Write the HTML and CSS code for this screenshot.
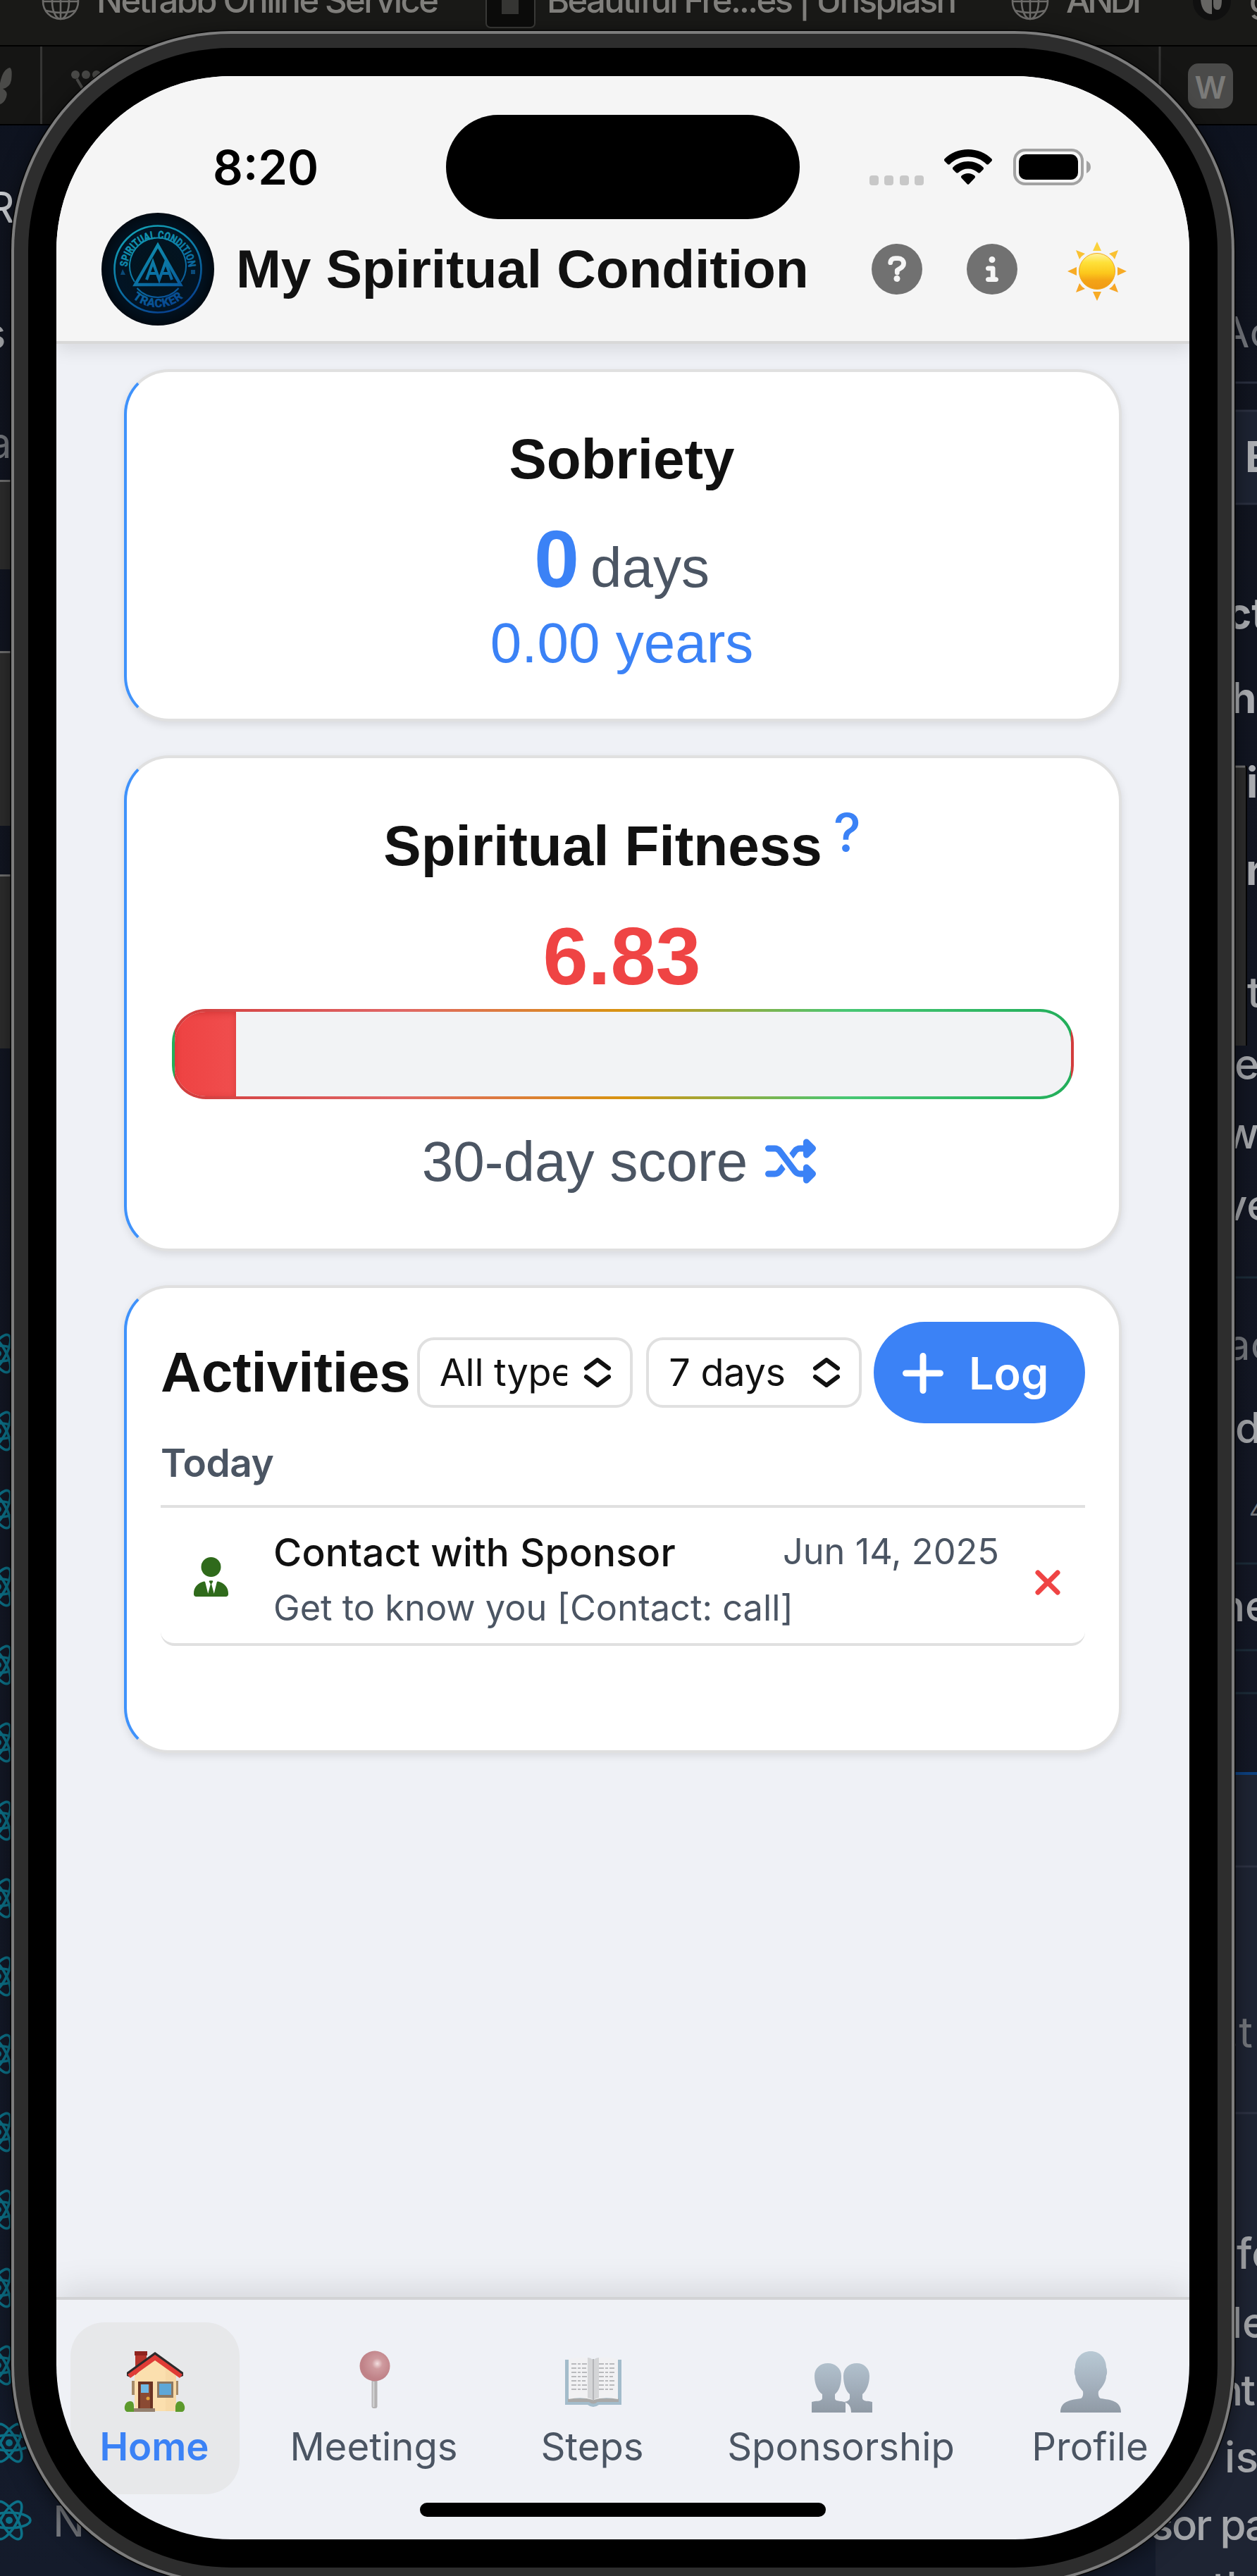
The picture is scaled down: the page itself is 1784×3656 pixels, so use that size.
FILE: index.html
```html
<!DOCTYPE html>
<html lang="en">
<head>
<meta charset="utf-8">
<title>My Spiritual Condition</title>
<link rel="stylesheet" href="styles.css">
</head>
<body>
<svg class="desktop" viewBox="0 0 1784 3656" width="1784" height="3656" aria-hidden="true">
  <defs>
    <linearGradient id="navy" x1="0" y1="0" x2="0" y2="1"><stop offset="0" stop-color="#0a1120"/><stop offset=".08" stop-color="#10141f"/><stop offset=".6" stop-color="#131724"/><stop offset="1" stop-color="#141b2b"/></linearGradient>
    <g id="globe" fill="none" stroke="#6c6b69" stroke-width="2.6"><circle r="25"/><ellipse rx="12" ry="25"/><path d="M0-25V25M-25 0H25M-21 13Q0 19 21 13M-21-13Q0-19 21-13"/></g>
    <g id="atom" fill="none" stroke="#0c7188" stroke-width="3.6"><ellipse rx="30" ry="11"/><ellipse rx="30" ry="11" transform="rotate(60)"/><ellipse rx="30" ry="11" transform="rotate(120)"/><circle r="5" fill="#0c7188" stroke="none"/></g>
  </defs>
  <rect width="1784" height="3656" fill="url(#navy)"/>
  <rect width="1784" height="64" fill="#191917"/>
  <rect y="64" width="1784" height="2" fill="#000"/>
  <rect y="66" width="1784" height="110" fill="#151514"/>
  <rect y="176" width="1784" height="2" fill="#000"/>
  <path d="M58.500 66V176M1646 66V176" stroke="#353534" stroke-width="3"/>
  <use href="#globe" x="86" y="2"/><use href="#globe" x="1462" y="2"/>
  <g class="bookmark">
    <text x="137" y="18" textLength="486">Netfabb Online Service</text>
    <text x="776" y="18" textLength="582">Beautiful Fre...es | Unsplash</text>
    <text x="1513" y="18" textLength="107">ANDI</text>
    <text x="1773" y="18">g</text>
  </g>
  <path d="M690 0V33a6 6 0 0 0 6 6H753a6 6 0 0 0 6-6V0" fill="#0c0c0b" stroke="#3a3a38" stroke-width="2"/><rect x="712" width="24" height="20" fill="#353533"/>
  <circle cx="1720" cy="2" r="27" fill="#101010"/><path d="M1704 0q2 20 16 20V0zM1722 0h12q0 14-6 14t-6-8z" fill="#666563"/>
  <rect x="1686" y="90" width="64" height="64" rx="15" fill="#4a4a49"/><text class="badge-letter" x="1718" y="140">W</text>
  <path d="M0 118Q4 98 14 96Q18 98 16 114Q14 124 4 126Q12 130 9 138Q6 146 0 148z" fill="#4a4a48"/>
  <g fill="#4a4a48"><circle cx="107" cy="106" r="6"/><circle cx="122" cy="106" r="6"/><circle cx="137" cy="106" r="6"/><path d="M109 112L121 132L133 112" fill="none" stroke="#4a4a48" stroke-width="4"/></g>
  <rect x="1752" y="582" width="32" height="133" fill="#1d2332"/>
  <rect x="1640" y="2518" width="144" height="1138" fill="#1e2433"/>
  <path d="M1752 583H1784M1752 715H1784M1752 543H1784" stroke="#2b3040" stroke-width="3"/>
  <path d="M1752 1813H1784M1752 2219H1784M1752 2342H1784M1752 2403H1784" stroke="#1c2c39" stroke-width="3"/>
  <path d="M1752 2517H1784" stroke="#0d4180" stroke-width="4"/>
  <path d="M1752 2649H1784M1752 2999H1784" stroke="#2d3243" stroke-width="3"/>
  <g class="page-text">
    <text x="-18" y="316" class="light">R</text>
    <text x="-24" y="495">s</text>
    <text x="-17" y="650" class="dim">a</text>
    <text x="1732" y="493" class="dim">Ac</text>
    <text x="1767" y="670" class="bold">B</text>
    <text x="1741" y="892" class="bold">ct</text>
    <text x="1746" y="1012" class="bold">h</text>
    <text x="1769" y="1132" class="bold">i</text>
    <text x="1768" y="1256" class="bold">r</text>
    <text x="1770" y="1430">t</text>
    <text x="1752" y="1532">e</text>
    <text x="1737" y="1630">w</text>
    <text x="1736" y="1732">ve</text>
    <text x="1741" y="1930" class="dim">ac</text>
    <text x="1753" y="2048">d</text>
    <text x="1773" y="2156" class="dim small">4</text>
    <text x="1731" y="2301">he</text>
    <text x="1741" y="2906" class="dim">.t</text>
    <text x="1755" y="3220">fo</text>
    <text x="1726" y="3318">de</text>
    <text x="1728" y="3414" textLength="54">nt</text>
    <text x="1738" y="3509" textLength="48">is</text>
    <text x="1633" y="3605" textLength="168">sor pa</text>
    <text x="1720" y="3694">th</text>
    <text x="75" y="3600" class="dim">No</text>
  </g>
  <g id="files">
    <use href="#atom" x="-3" y="1921"/><use href="#atom" x="-3" y="2031"/><use href="#atom" x="-3" y="2142"/><use href="#atom" x="-3" y="2252"/><use href="#atom" x="-3" y="2363"/><use href="#atom" x="-3" y="2473"/><use href="#atom" x="-3" y="2584"/><use href="#atom" x="-3" y="2694"/><use href="#atom" x="-3" y="2805"/><use href="#atom" x="-3" y="2915"/><use href="#atom" x="-3" y="3026"/><use href="#atom" x="-3" y="3136"/><use href="#atom" x="-3" y="3247"/><use href="#atom" x="-3" y="3357"/><use href="#atom" x="13" y="3467"/><use href="#atom" x="13" y="3577"/>
  </g>
  <g fill="#2d2d2d"><rect y="681" width="20" height="127"/><rect y="924" width="20" height="248"/><rect y="1241" width="20" height="247"/><rect x="1748" y="1087" width="20" height="397"/></g>
  <path d="M0 682.500H16M0 925.500H16M0 1242.500H16M1752 1088H1767" stroke="#6f6f6f" stroke-width="3"/>
  <path d="M1769 1087V1484" stroke="#060606" stroke-width="2"/>
</svg>

<div class="phone"><div class="phone-band"><div class="phone-bezel">
<div class="screen">
  <div class="status">
    <span class="time">8:20</span>
    <div class="island"></div>
    <div class="signals">
      <span class="dots"><i></i><i></i><i></i><i></i></span>
      <svg class="wifi" viewBox="0 0 68 50"><path d="M34 0C47 0 59 5 67.500 13.500Q68.500 15 67.500 16.500L63 21Q61.500 22 60 21C53 14 44 10.500 34 10.500S15 14 8 21Q6.500 22 5 21L.5 16.500Q-.5 15 .5 13.500C9 5 21 0 34 0zM34 17C42 17 50 20 55.500 25.500Q56.500 27 55.500 28.500L51 33Q49.500 34 48 33C44 29.500 39.500 27.500 34 27.500S24 29.500 20 33Q18.500 34 17 33L12.500 28.500Q11.500 27 12.500 25.500C18 20 26 17 34 17zM34 34Q39.500 34 43.500 37.500Q44.500 39 43.500 40.500L35 49.500Q34 50 33 49.500L24.500 40.500Q23.500 39 24.500 37.500Q28.500 34 34 34z"/></svg>
      <svg class="battery" viewBox="0 0 110 52"><rect x="2" y="2" width="96" height="48" rx="15" fill="none" stroke="#a2a2a2" stroke-width="4"/><rect x="8" y="8" width="84" height="36" rx="10"/><path d="M104 17q6 3 6 9t-6 9z" fill="#a2a2a2"/></svg>
    </div>
  </div>

  <header class="app-header">
    <svg class="logo" viewBox="0 0 160 160">
      <defs>
        <radialGradient id="disc"><stop offset="0" stop-color="#03131b"/><stop offset=".72" stop-color="#021424"/><stop offset="1" stop-color="#020a12"/></radialGradient>
        <linearGradient id="ink" gradientUnits="userSpaceOnUse" x1="50" y1="20" x2="110" y2="145"><stop offset="0" stop-color="#13a0b5"/><stop offset=".5" stop-color="#0b73a3"/><stop offset="1" stop-color="#07398c"/></linearGradient>
        <path id="arcTop" d="M36.500 80A43.500 43.500 0 0 1 123.500 80"/>
        <path id="arcBottom" d="M26 80A54 54 0 0 0 134 80"/>
      </defs>
      <circle cx="80" cy="80" r="80" fill="url(#disc)"/>
      <g fill="none" stroke="url(#ink)">
        <circle cx="80" cy="80" r="61.500" stroke-width="2.600"/>
        <path d="M47 98A40 40 0 1 1 113 98M50.500 107A40 40 0 0 0 109.500 107" stroke-width="2"/>
        <path d="M80 46L48 102H112Z" stroke-width="4.500"/>
        <path d="M64 95L73 70L82 95L91 70L100 95M67 86H79M85 86H97" stroke-width="4"/>
      </g>
      <g class="logo-text" fill="url(#ink)" stroke="url(#ink)" stroke-width=".5">
        <text font-size="15"><textPath href="#arcTop" startOffset="3" textLength="131" lengthAdjust="spacingAndGlyphs">SPIRITUAL CONDITION</textPath></text>
        <text font-size="16.500"><textPath href="#arcBottom" startOffset="46" textLength="78">TRACKER</textPath></text>
      </g>
      <path d="M27 88l3-8l4 8zM127 81h6v6h-6z" fill="#0a4a78"/>
    </svg>
    <h1>My Spiritual Condition</h1>
    <svg class="header-icon" viewBox="0 0 512 512"><circle cx="256" cy="256" r="256" fill="#717171"/><path d="M190 190C192 160 212 146 240 146H268C300 146 324 168 324 198C324 222 310 236 292 247L258 268V292" fill="none" stroke="#f5f5f5" stroke-width="48" stroke-linecap="round" stroke-linejoin="round"/><circle cx="256" cy="352" r="32" fill="#f5f5f5"/></svg>
    <svg class="header-icon info" viewBox="0 0 512 512"><path fill="#717171" d="M256 512A256 256 0 1 0 256 0a256 256 0 1 0 0 512zM216 336h24V272H216c-13.300 0-24-10.700-24-24s10.700-24 24-24h48c13.300 0 24 10.700 24 24v88h8c13.300 0 24 10.700 24 24s-10.700 24-24 24H216c-13.300 0-24-10.700-24-24s10.700-24 24-24zm40-208a32 32 0 1 1 0 64 32 32 0 1 1 0-64z"/></svg>
    <svg class="sun" viewBox="0 0 84 84">
      <defs><linearGradient id="sunFill" x1="0" y1="0" x2="0" y2="1"><stop offset="0" stop-color="#fff3a0"/><stop offset=".25" stop-color="#fee13a"/><stop offset=".55" stop-color="#fcc81c"/><stop offset=".75" stop-color="#f4a416"/><stop offset="1" stop-color="#f09a14"/></linearGradient></defs>
      <path d="M42 0L48 13H36z" fill="#fbd23c"/><path d="M42 84L48 71H36zM0 42L13 36V48zM84 42L71 36V48z" fill="#f7ab25"/><path d="M12 12L25 17Q20 20 17 25zM72 12L59 17Q64 20 67 25z" fill="#f9c133"/><path d="M12 72L25 67Q20 64 17 59zM72 72L59 67Q64 64 67 59z" fill="#f6a627"/>
      <circle cx="42" cy="42" r="25.500" fill="url(#sunFill)" stroke="#f3a91c" stroke-width="1"/>
    </svg>
  </header>

  <main>
    <section class="card sobriety">
      <h2>Sobriety</h2>
      <p class="days"><b>0</b><span>days</span></p>
      <p class="years">0.00 years</p>
    </section>

    <section class="card fitness">
      <h2>Spiritual Fitness<sup>?</sup></h2>
      <p class="score">6.83</p>
      <div class="meter"><div class="meter-fill" style="width:6.83%"></div></div>
      <p class="window">30-day score
        <svg viewBox="0 0 512 512"><path d="M403.800 34.400c12-5 25.700-2.200 34.900 6.900l64 64c6 6 9.400 14.100 9.400 22.600s-3.400 16.600-9.400 22.600l-64 64c-9.200 9.200-22.900 11.900-34.900 6.900s-19.800-16.600-19.800-29.600V160H352c-10.100 0-19.600 4.700-25.600 12.800L284 229.300 244 176l31.200-41.600C293.300 110.200 321.800 96 352 96h32V64c0-12.900 7.800-24.600 19.800-29.600zM164 282.700L204 336l-31.200 41.600C154.700 401.800 126.200 416 96 416H32c-17.700 0-32-14.300-32-32s14.300-32 32-32H96c10.100 0 19.600-4.700 25.600-12.800L164 282.700zm274.600 188c-9.200 9.200-22.900 11.900-34.900 6.900s-19.800-16.600-19.800-29.600V416H352c-30.200 0-58.700-14.200-76.800-38.400L121.600 172.800c-6-8.100-15.500-12.800-25.600-12.800H32c-17.700 0-32-14.300-32-32s14.300-32 32-32H96c30.200 0 58.700 14.200 76.800 38.400L326.400 339.200c6 8.100 15.500 12.800 25.600 12.800h32V320c0-12.900 7.800-24.600 19.800-29.600s25.700-2.200 34.900 6.900l64 64c6 6 9.400 14.100 9.400 22.600s-3.400 16.600-9.400 22.600l-64 64z"/></svg>
      </p>
    </section>

    <section class="card activities">
      <div class="toolbar">
        <h2>Activities</h2>
        <div class="select"><span class="all">All types</span><svg viewBox="0 0 40 42"><path d="M4 15L20 3L36 15M4 27L20 39L36 27"/></svg></div>
        <div class="select"><span class="seven">7 days</span><svg viewBox="0 0 40 42"><path d="M4 15L20 3L36 15M4 27L20 39L36 27"/></svg></div>
        <button class="log"><svg viewBox="0 0 58 58"><path d="M29 4.500V53.500M4.500 29H53.500"/></svg><span>Log</span></button>
      </div>
      <h3>Today</h3>
      <article class="entry">
        <svg class="tie" viewBox="0 0 448 512"><path d="M224 256A128 128 0 1 0 224 0a128 128 0 1 0 0 256zm-15 48c-8 0-13 8-9 15l18 31-33 123-36-146c-2-9-10-14-19-12C54 331 0 393 0 467v15c0 17 13 30 30 30H418c17 0 30-13 30-30v-15c0-74-54-136-130-152-9-2-17 3-19 12L263 473 230 350l18-31c4-7-1-15-9-15z"/></svg>
        <div class="entry-body">
          <div class="entry-head"><strong>Contact with Sponsor</strong><time>Jun 14, 2025</time></div>
          <p>Get to know you [Contact: call]</p>
        </div>
        <svg class="remove" viewBox="0 0 36 36"><path d="M4 4L32 32M32 4L4 32"/></svg>
      </article>
    </section>
  </main>

  <nav>
    <a class="tab active">
      <svg viewBox="0 0 88 88"><rect x="16" y="2" width="16" height="36" fill="#b5342b"/><rect x="15" y="1" width="18" height="6" fill="#8f231e"/><rect x="11" y="43" width="5" height="20" fill="#a58a68"/><rect x="72" y="43" width="5" height="20" fill="#a58a68"/><path d="M44 8L15 36V86H74V36z" fill="#fbdfae"/><path d="M44 8L59 24V86H74V36z" fill="#f3d3a0" opacity=".5"/><path d="M44 2L4 31V36L9 38L44 10L79 38L84 36V31z" fill="#2e2a2b"/><path d="M44 6L5 34L9 39L44 14L79 39L83 34z" fill="#e03c36"/><rect x="20" y="44" width="21" height="40" fill="#6b3323"/><rect x="23" y="48" width="14" height="34" fill="#8a4a33"/><rect x="24" y="48" width="11" height="12" fill="#70b8e4"/><circle cx="34" cy="68" r="2.500" fill="#e3a43c"/><rect x="47" y="44" width="23" height="23" fill="#8d7760"/><rect x="50" y="47" width="17" height="16" fill="#5ea7d8"/><rect x="13" y="82" width="31" height="5" fill="#94806f"/><path d="M4 87q-4-2-3-8t7-7t6 7v8zM73 87v-8q1-7 6-7t7 7q1 6-3 8z" fill="#5d9a2c"/></svg>
      <span>Home</span>
    </a>
    <a class="tab meetings">
      <svg viewBox="0 0 88 88"><defs><radialGradient id="pinHead" cx=".58" cy=".42"><stop offset="0" stop-color="#f3dfe0"/><stop offset=".35" stop-color="#cf9b9f"/><stop offset="1" stop-color="#c08288"/></radialGradient></defs><rect x="39.500" y="40" width="8" height="42" rx="3" fill="#b4b2b3"/><rect x="41" y="44" width="2.500" height="36" fill="#cfcfd0"/><circle cx="44" cy="22" r="21.500" fill="url(#pinHead)"/></svg>
      <span>Meetings</span>
    </a>
    <a class="tab steps">
      <svg viewBox="0 0 88 88"><path d="M4 13H84V77H52Q44 83 36 77H4z" fill="#a3bccb"/><path d="M8 68H80V73H50Q44 78 38 73H8z" fill="#a9a9a8"/><path d="M9 12Q30 7 43.500 13V70Q28 65 9 69zM79 12Q58 7 44.500 13V70Q60 65 79 69z" fill="#f1f1f3"/><path d="M43.500 13Q40 10 36 10V67Q40 68 44 70Q48 68 52 67V10Q48 10 44.500 13z" fill="#d4d5d7"/><path d="M44 12V71" stroke="#b4b5b8" stroke-width="2"/><path d="M13 19H36M13 25H34M13 31H36M13 37H36M13 43H33M13 49H36M13 55H35M52 19H75M52 25H74M52 31H75M52 37H72M52 43H75M52 49H75M52 55H72" stroke="#b9babd" stroke-width="2" stroke-dasharray="7 2 4 2"/></svg>
      <span>Steps</span>
    </a>
    <a class="tab sponsorship">
      <svg viewBox="0 0 88 88"><defs><linearGradient id="people" gradientUnits="userSpaceOnUse" x1="0" y1="0" x2="0" y2="88"><stop offset="0" stop-color="#b9cad5"/><stop offset=".5" stop-color="#a6b3c0"/><stop offset="1" stop-color="#909aa5"/></linearGradient></defs><path d="M24 18C34 18 43 25 43 36C43 50 39 58 34 62V68C34 73 46 71 49 74V88H1V73C6 71 15 73 16 68V62C9 57 5 47 5 36C5 25 13 18 24 18z" fill="url(#people)"/><path d="M65 18C75 18 83 25 83 36C83 47 79 57 73 62V68C74 73 82 71 87 73V88H57C57 80 54 75 47 73Q54 72 55 68V62C49 57 46 47 46 36C46 25 54 18 65 18z" fill="url(#people)"/></svg>
      <span>Sponsorship</span>
    </a>
    <a class="tab profile">
      <svg viewBox="0 0 88 88"><path d="M44 1C57 1 66 11 66 24C67 26 68 32 66 36C66 46 58 54 55 58Q54 66 58 68C72 70 87 71 87 88H1C1 71 16 70 30 68Q34 66 33 58C30 54 22 46 22 36C20 32 21 26 22 24C22 11 31 1 44 1z" fill="url(#people)"/></svg>
      <span>Profile</span>
    </a>
  </nav>
  <div class="home-indicator"></div>
</div>
</div></div></div>
</body>
</html>
```
FILE: styles.css
```css
* { box-sizing: border-box; }
html, body { margin: 0; height: 3656px; overflow: hidden; background: #10141f; }
body { position: relative; font-family: Inter, "Noto Sans", sans-serif; color: #111; }
h1, h2, h3, p { margin: 0; }
svg { display: block; flex: none; }

/* desktop behind the simulator */
.desktop { position: absolute; inset: 0; }
.bookmark { font: 500 49px Inter, sans-serif; fill: #807f7c; }
.badge-letter { font: 600 44px Inter, sans-serif; fill: #7b7b79; text-anchor: middle; }
.page-text { font: 500 60px Inter, sans-serif; fill: #a5a7ab; }
.page-text .dim { fill: #74777d; font-weight: 400; }
.page-text .light { fill: #c9ccd1; font-weight: 400; }
.page-text .bold { font-weight: 700; fill: #aeb0b4; }
.page-text .small { font-size: 34px; }

/* device */
.phone { position: absolute; left: 16px; top: 44px; width: 1736px; height: 3624px; padding: 4px; border-radius: 312px; background: #7d7d7d; box-shadow: 0 0 0 1.5px #050505, 0 6px 30px rgba(0, 0, 0, .5); }
.phone-band { height: 100%; padding: 20px; border-radius: 308px; background: #2d2d2d; }
.phone-bezel { height: 100%; padding: 40px; border-radius: 288px; background: #000; }
.screen { position: relative; display: flex; flex-direction: column; height: 100%; overflow: hidden; border-radius: 248px; background: #eff1f6; }

/* status bar */
.status { position: relative; z-index: 2; display: grid; grid-template-columns: 553px 502px 1fr; height: 194px; padding-top: 55px; background: #f5f5f5; flex: none; }
.time { padding-left: 222px; line-height: 150px; font-size: 67px; font-weight: 600; color: #000; }
.island { height: 148px; border-radius: 74px; background: #000; }
.signals { display: flex; align-items: center; height: 148px; padding-left: 99px; }
.dots { display: flex; gap: 8.300px; margin: 38px 29px 0 0; }
.dots i { width: 13px; height: 14px; border-radius: 4px; background: #c8c8c8; }
.wifi { width: 68px; height: 50px; margin-right: 30px; }
.battery { width: 110px; height: 52px; }

/* header */
.app-header { display: flex; align-items: center; height: 186px; padding: 0 89px 22px 64px; border-bottom: 4px solid #d8d8d8; background: #f5f5f5; box-shadow: 0 8px 24px rgba(0, 0, 0, .1); flex: none; z-index: 1; }
.logo { width: 160px; height: 160px; }
.logo-text { font-family: Roboto, sans-serif; font-weight: 700; }
.app-header h1 { margin: 0 auto 2px 31px; font: 700 76.800px/96px "Liberation Sans", sans-serif; letter-spacing: -.1px; white-space: nowrap; }
.header-icon { width: 72px; height: 72px; }
.info { margin-left: 63px; }
.sun { width: 84px; height: 84px; margin: 5px 0 0 71px; }

/* cards */
main { flex: 1; display: flex; flex-direction: column; gap: 48px; padding: 36px 96px 0; }
.card { border: 4px solid #e0e0e0; border-left-color: #3f92fb; border-radius: 64px; background: #fff; box-shadow: 0 4px 12px rgba(0, 0, 0, .1); font-family: "Liberation Sans", sans-serif; }
.card h2 { font-size: 80px; line-height: 96px; font-weight: 700; }
.sobriety { height: 500px; padding: 76px 3px 0 0; text-align: center; }
.days { display: flex; justify-content: center; align-items: baseline; gap: 16px; margin-top: 35px; font-size: 80px; line-height: 116px; height: 116px; color: #4b5563; }
.days b { font-size: 115.200px; color: #3b82f6; }
.years { margin-top: 14px; font-size: 80px; line-height: 96px; color: #3b82f6; }
.fitness { height: 704px; padding-top: 77px; text-align: center; }
.fitness h2 { display: flex; justify-content: center; gap: 16px; padding-right: 2px; }
.fitness sup { font: 500 74px/96px Inter, sans-serif; color: #3b82f6; position: relative; top: -20px; }
.score { margin-top: 50px; padding-right: 3px; font-size: 115.200px; line-height: 116px; font-weight: 700; color: #ef4444; }
.meter { height: 128px; margin: 17px 64px 0; border: 4px solid transparent; border-radius: 48px; overflow: hidden;
  background: linear-gradient(#f2f3f5, #f2f3f5) padding-box, linear-gradient(90deg, #d23c3c 0, #e06666 25%, #d99310 50%, #48c774 75%, #22ae5a 100%) border-box; background-origin: padding-box; }
.meter-fill { height: 100%; background: linear-gradient(90deg, #ee4242, #f04e4e); box-shadow: inset 0 2px 10px rgba(160, 20, 20, .35); }
.window { display: flex; justify-content: center; align-items: center; gap: 25px; margin-top: 41px; padding-right: 11px; font-size: 80px; line-height: 96px; color: #4b5563; }
.window svg { width: 72px; height: 72px; margin-top: -2px; fill: #3b82f6; }

/* activities */
.activities { height: 664px; padding: 48px; font-family: Inter, sans-serif; }
.toolbar { display: grid; grid-template-columns: 350px 306px 306px 300px; column-gap: 10px; justify-content: space-between; align-items: center; height: 144px; }
.toolbar h2 { font-family: "Liberation Sans", sans-serif; letter-spacing: -.1px; }
.select { display: flex; align-items: center; justify-content: space-between; height: 100px; padding: 0 26px 0 28px; border: 4px solid #e0e0e0; border-radius: 24px; font-size: 54px; line-height: 80px; color: #111; }
.toolbar .select:nth-child(2) { margin: 0 3px 0 -3px; }
.select span { width: 181px; overflow: hidden; white-space: nowrap; letter-spacing: -.3px; }
.select svg { width: 40px; height: 42px; fill: none; stroke: #111; stroke-width: 6; stroke-linecap: round; stroke-linejoin: round; }
.log { display: flex; align-items: center; gap: 35px; width: 300px; height: 144px; padding: 0 0 0 41px; border: 0; border-radius: 72px; background: #3b82f6; color: #fff; font: 600 63px/80px Inter, sans-serif; }
.log svg { width: 58px; height: 58px; margin-top: 2px; fill: none; stroke: #fff; stroke-width: 9; stroke-linecap: round; }
.log span { padding: 2px 0 0 1px; }
.activities h3 { margin-top: 22px; padding-bottom: 26px; border-bottom: 4px solid #e0e0e0; font-size: 55px; line-height: 68px; font-weight: 600; letter-spacing: -.5px; color: #4b5563; }
.entry { display: flex; height: 180px; margin-top: 16px; padding: 17px 35px 0 47px; border-bottom: 4px solid #e0e0e0; border-radius: 20px; }
.tie { width: 49px; height: 56px; margin-top: 37px; fill: #2f6a1b; }
.entry-body { width: 1030px; margin: 0 auto 0 64px; white-space: nowrap; color: #4b5563; }
.entry-head { display: flex; justify-content: space-between; line-height: 60px; }
.entry strong { font-size: 55px; font-weight: 500; letter-spacing: .15px; color: #111; }
.entry time { font-size: 50.500px; line-height: 58px; }
.entry p { margin-top: 19px; font-size: 50.500px; line-height: 60px; }
.remove { width: 36px; height: 36px; margin-top: 55px; fill: none; stroke: #ef4444; stroke-width: 7; stroke-linecap: round; }

/* bottom navigation */
nav { display: grid; grid-template-columns: 240px 383px 237px 469px 238px; height: 344px; padding: 32px 0 0 20px; border-top: 4px solid #d2d3d5; box-shadow: 0 -8px 48px rgba(0, 0, 0, .12); flex: none; }
.tab { display: flex; flex-direction: column; align-items: center; height: 244px; padding-top: 40px; border-radius: 48px; font-size: 54.500px; line-height: 64px; color: #4b5563; }
.tab svg { width: 88px; height: 88px; margin-bottom: 16px; }
.tab span { margin-left: -2px; }
.tab.active { background: #e7e8ea; color: #3b82f6; font-weight: 600; }
.home-indicator { position: absolute; left: 516px; bottom: 32px; width: 576px; height: 20px; border-radius: 10px; background: #000; }
```
